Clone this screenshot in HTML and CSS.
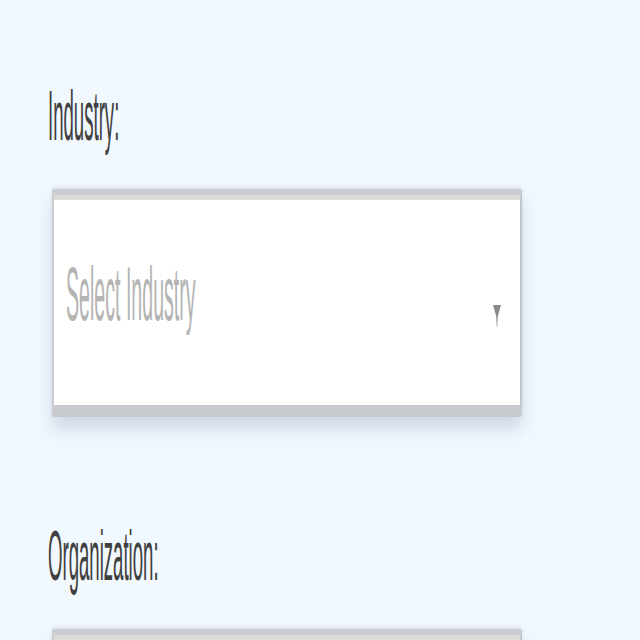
FILE: index.html
```html
<!DOCTYPE html>
<html>
<head>
<meta charset="utf-8">
<link rel="stylesheet" href="styles.css">
</head>
<body>
<form class="form">
  <div class="field">
    <div class="label"><span class="label-text">Industry:</span></div>
    <div class="select">
      <span class="placeholder">Select Industry</span>
      <svg class="arrow" width="10" height="22" viewBox="0 0 10 22"><polygon points="1,0 9,0 5.8,11 5.2,22 4.8,22 4.2,11" fill="#8a8a8a"/></svg>
    </div>
  </div>
  <div class="field field-second">
    <div class="label"><span class="label-text">Organization:</span></div>
    <div class="select"></div>
  </div>
</form>
</body>
</html>
```

FILE: styles.css
```css
html, body {
  margin: 0;
  padding: 0;
  background: #f1f8fe;
}
.form {
  padding: 84px 0 0 48px;
}
.field-second {
  margin-top: 107px;
}
.label {
  height: 70px;
}
.label-text {
  display: inline-block;
  font-family: "Liberation Sans", Arial, sans-serif;
  font-size: 18.6px;
  line-height: 1;
  color: #404040;
  transform: scaleY(3.75);
  transform-origin: 0 0;
}
.select {
  margin: 35px 0 0 4px;
  width: 436px;
  height: 210px;
  box-sizing: content-box;
  background: #ffffff;
  border-left: 2px solid #c9ccd0;
  border-right: 2px solid #c2c6cb;
  border-top: 6px solid #c9cdd1;
  border-bottom: 12px solid #c6c9cd;
  border-radius: 3px;
  box-shadow: inset 0 5px 0 #dcdcdc, 0 12px 16px rgba(175, 188, 210, 0.5), 0 -2px 3px rgba(200, 205, 212, 0.5);
  display: flex;
  justify-content: space-between;
  align-items: flex-start;
  padding: 0 18px 0 12px;
}
.placeholder {
  display: inline-block;
  margin-top: 63px;
  font-family: "Liberation Sans", Arial, sans-serif;
  font-size: 19.6px;
  line-height: 1;
  color: #b4b4b4;
  transform: scaleY(3.85);
  transform-origin: 0 0;
}
.arrow {
  margin-top: 110px;
  display: block;
}
```
